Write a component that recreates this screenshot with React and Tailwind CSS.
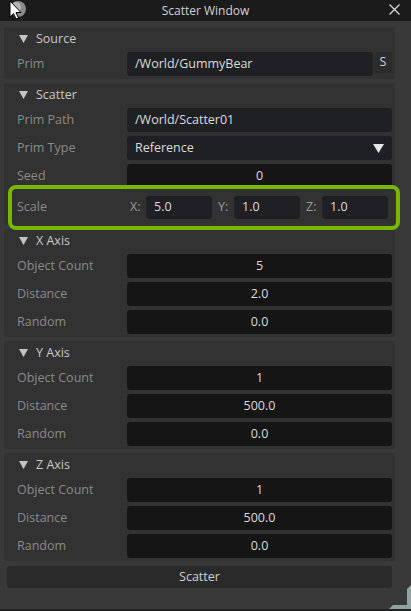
import React from 'react';

const FONT = { fontFamily: '"Open Sans", "Noto Sans", sans-serif' };

// small caret used on the collapsable frame headers
const Caret = () => (
  <svg width="9" height="8" viewBox="0 0 9 8" className="shrink-0">
    <path d="M0 0 H9 L4.5 8 Z" fill="#c4c4c4" />
  </svg>
);

const Frame = ({ title, children, className = '' }) => (
  <div className={`bg-[#323232] rounded-[3px] pb-[3px] ${className}`}>
    <div className="h-[23px] mb-[2px] pt-[1px] flex items-center gap-[8px] pl-[15px] text-[12.5px] text-[#c8c8c8]">
      <Caret />
      <span className="leading-none">{title}</span>
    </div>
    <div className="flex flex-col gap-[4px]">{children}</div>
  </div>
);

const Row = ({ label, children, tall }) => (
  <div className={`${tall ? 'h-[30px]' : 'h-[24px]'} flex items-center pr-[3px]`}>
    <div className="w-[123px] pl-[13px] pt-[1px] text-[12.5px] text-[#8a8a8a]">{label}</div>
    <div className="flex-1 h-full flex items-center">{children}</div>
  </div>
);

const TextField = ({ value }) => (
  <div className="flex-1 h-full bg-[#1f2023] rounded-[3px] flex items-center pl-[8px] pt-[1px] text-[12.5px] text-[#dcdcdc]">
    {value}
  </div>
);

const NumField = ({ value }) => (
  <div className="flex-1 h-full bg-[#151515] rounded-[3px] flex items-center justify-center pt-[1px] text-[12.5px] text-[#dcdcdc]">
    {value}
  </div>
);

const AxisFrame = ({ title, count, distance, random }) => (
  <Frame title={title} className="mt-[4px]">
    <Row label="Object Count"><NumField value={count} /></Row>
    <Row label="Distance"><NumField value={distance} /></Row>
    <Row label="Random"><NumField value={random} /></Row>
  </Frame>
);

const ScaleField = ({ axis, value }) => (
  <div className="flex items-center">
    <span className="w-[16px] pt-[1px] text-[12.5px] text-[#9a9a9a]">{axis}</span>
    <div className="w-[66px] h-[23px] bg-[#1f2023] rounded-[3px] flex items-center pl-[8px] pt-[1px] text-[12.5px] text-[#dcdcdc]">
      {value}
    </div>
  </div>
);

export default function App() {
  return (
    <div className="w-[411px] h-[611px] bg-[#393939] flex flex-col relative overflow-hidden" style={FONT}>
      {/* title bar */}
      <div className="h-[21px] bg-[#1b1b1b] flex items-center justify-center relative shrink-0">
        <span className="text-[12px] text-[#d2d2d2]">Scatter Window</span>
        <svg width="11" height="11" viewBox="0 0 11 11" className="absolute right-[11px] top-[4px]">
          <path d="M0.5 0.5 L10.5 10.5 M10.5 0.5 L0.5 10.5" stroke="#d8d8d8" strokeWidth="1.3" />
        </svg>
      </div>

      <div className="flex flex-col pl-[4px] pr-[16px] pt-[6px]">
        <Frame title="Source">
          <Row label="Prim">
            <TextField value="/World/GummyBear" />
            <div className="w-[18px] h-[21px] self-start ml-[1px] bg-[#2c2c2c] rounded-[2px] flex items-center justify-center text-[12.5px] text-[#d0d0d0]">
              S
            </div>
          </Row>
        </Frame>

        <Frame title="Scatter" className="mt-[4px]">
          <Row label="Prim Path"><TextField value="/World/Scatter01" /></Row>
          <Row label="Prim Type">
            <div className="flex-1 h-full bg-[#1f2023] rounded-[3px] flex items-center pl-[8px] pr-[8px] text-[12.5px] text-[#dcdcdc]">
              <span className="flex-1 pt-[1px]">Reference</span>
              <svg width="11" height="9" viewBox="0 0 11 9">
                <path d="M0 0 H11 L5.5 9 Z" fill="#e6e6e6" />
              </svg>
            </div>
          </Row>
          <Row label="Seed"><NumField value="0" /></Row>
          <Row label="Scale" tall>
            <div className="flex items-center gap-[6px] pl-[3px]">
              <ScaleField axis="X:" value="5.0" />
              <ScaleField axis="Y:" value="1.0" />
              <ScaleField axis="Z:" value="1.0" />
            </div>
          </Row>
        </Frame>

        <AxisFrame title="X Axis" count="5" distance="2.0" random="0.0" />
        <AxisFrame title="Y Axis" count="1" distance="500.0" random="0.0" />
        <AxisFrame title="Z Axis" count="1" distance="500.0" random="0.0" />

        <div className="mt-[5px] ml-[3px] mr-[3px] h-[22px] bg-[#2a2a2a] rounded-[3px] flex items-center justify-center pt-[1px] text-[12.5px] text-[#d0d0d0]">
          Scatter
        </div>
      </div>

      {/* green highlight drawn over the Scale row */}
      <div className="absolute left-[8px] top-[185px] w-[392px] h-[45px] border-[4px] border-[#76b900] rounded-[8px] pointer-events-none" />

      {/* resize grip */}
      <svg width="22" height="24" viewBox="0 0 22 24" className="absolute right-0 bottom-[2px]">
        <path d="M22 0 V24 H0 L4 20 H18 V4 Z" fill="#8fa3a3" />
      </svg>
      <div className="absolute left-0 right-0 bottom-0 h-[2px] bg-[#222]" />

      {/* window icon + mouse cursor */}
      <svg width="26" height="24" viewBox="0 0 26 24" className="absolute left-[6px] top-0">
        <circle cx="12" cy="9" r="8" fill="#8a8a8a" />
        <circle cx="10" cy="7" r="5" fill="#b4b4b4" />
        <path d="M4 1 V17 L7.5 13.5 L10 19 L12.5 18 L10 12.5 H15 Z" fill="#fff" stroke="#000" strokeWidth="1" />
      </svg>
    </div>
  );
}
